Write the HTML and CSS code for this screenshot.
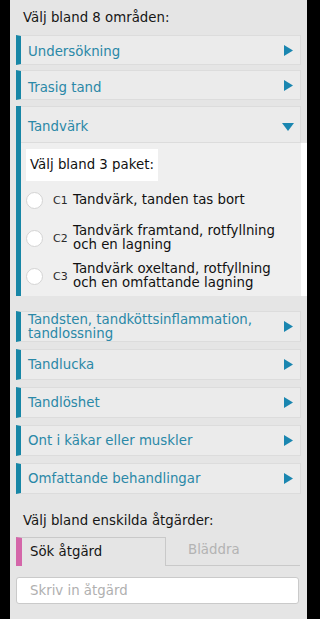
FILE: index.html
```html
<!DOCTYPE html>
<html lang="sv">
<head>
<meta charset="utf-8">
<title>Välj område</title>
<link rel="stylesheet" href="styles.css">
</head>
<body>
<div class="panel">
  <div class="heading">Välj bland 8 områden:</div>
  <div class="areas">
    <div class="item first"><span class="label">Undersökning</span><svg class="arr" width="9" height="11" viewBox="0 0 9 11"><path d="M0 0L9 5.5L0 11Z"/></svg></div>
    <div class="item second"><span class="label">Trasig tand</span><svg class="arr" width="9" height="11" viewBox="0 0 9 11"><path d="M0 0L9 5.5L0 11Z"/></svg></div>
    <div class="group">
      <div class="group-head"><span class="label">Tandvärk</span><svg class="arr" width="12" height="8" viewBox="0 0 12 8"><path d="M0 0H12L6 8Z"/></svg></div>
      <div class="group-body">
        <div class="pkg-title">Välj bland 3 paket:</div>
        <div class="pkg">
          <span class="radio"></span><span class="code">C1</span><span class="pkg-text">Tandvärk, tanden tas bort</span>
        </div>
        <div class="pkg">
          <span class="radio"></span><span class="code">C2</span><span class="pkg-text">Tandvärk framtand, rotfyllning<br>och en lagning</span>
        </div>
        <div class="pkg">
          <span class="radio"></span><span class="code">C3</span><span class="pkg-text">Tandvärk oxeltand, rotfyllning<br>och en omfattande lagning</span>
        </div>
      </div>
    </div>
    <div class="item later"><span class="label">Tandsten, tandköttsinflammation,<br>tandlossning</span><svg class="arr" width="9" height="11" viewBox="0 0 9 11"><path d="M0 0L9 5.5L0 11Z"/></svg></div>
    <div class="item later"><span class="label">Tandlucka</span><svg class="arr" width="9" height="11" viewBox="0 0 9 11"><path d="M0 0L9 5.5L0 11Z"/></svg></div>
    <div class="item later"><span class="label">Tandlöshet</span><svg class="arr" width="9" height="11" viewBox="0 0 9 11"><path d="M0 0L9 5.5L0 11Z"/></svg></div>
    <div class="item later"><span class="label">Ont i käkar eller muskler</span><svg class="arr" width="9" height="11" viewBox="0 0 9 11"><path d="M0 0L9 5.5L0 11Z"/></svg></div>
    <div class="item later last"><span class="label">Omfattande behandlingar</span><svg class="arr" width="9" height="11" viewBox="0 0 9 11"><path d="M0 0L9 5.5L0 11Z"/></svg></div>
  </div>
  <div class="sub-heading">Välj bland enskilda åtgärder:</div>
  <div class="tabs">
    <div class="tab active">Sök åtgärd</div>
    <div class="tab inactive">Bläddra</div>
  </div>
  <input class="search" type="text" placeholder="Skriv in åtgärd">
</div>
</body>
</html>
```

FILE: styles.css
```css
html, body {
  margin: 0;
  padding: 0;
  background: #000;
}

.panel {
  width: 297px;
  margin: 0 0 0 10px;
  padding: 0 6px;
  min-height: 619px;
  box-sizing: border-box;
  background: #e5e5e5;
  font-family: "DejaVu Sans", "Liberation Sans", sans-serif;
  font-size: 13.33px;
  color: #161616;
}

.heading {
  height: 35px;
  box-sizing: border-box;
  padding: 10px 0 0 7px;
  line-height: 15px;
}

.areas {
  display: flex;
  flex-direction: column;
}

.item {
  display: flex;
  align-items: center;
  justify-content: space-between;
  box-sizing: border-box;
  height: 30px;
  padding: 0 7px 0 7px;
  background: #ebebeb;
  border: 1px solid #dcdcdc;
  border-left: 5px solid #1786a6;
  color: #2a88a7;
  line-height: 14px;
}

.item.first { margin-bottom: 5px; }
.item.second { margin-bottom: 6px; }
.item.first .label { margin-top: 3px; }
.item.second .label { margin-top: 5px; }
.item.later { height: 31px; margin-bottom: 7px; }
.item.later.last { margin-bottom: 0; }

.arr {
  flex: none;
  fill: #1a86b0;
}

.group {
  border-left: 5px solid #1786a6;
  margin-bottom: 15px;
}

.group-head {
  display: flex;
  align-items: center;
  justify-content: space-between;
  box-sizing: border-box;
  height: 37px;
  padding: 4px 6px 0 7px;
  background: #ebebeb;
  border: 1px solid #dcdcdc;
  border-left: none;
  color: #2a88a7;
  line-height: 15px;
}

.group-body {
  margin-right: -6px;
  border-right: 6px solid #fff;
  background: #efefef;
  padding: 6px 0 1px 5px;
}

.pkg-title {
  display: inline-block;
  background: #fff;
  padding: 0 4px;
  height: 32px;
  line-height: 32px;
  color: #111;
}

.pkg {
  display: flex;
  align-items: center;
  min-height: 38px;
}

.radio {
  flex: none;
  width: 15px;
  height: 15px;
  border-radius: 50%;
  background: #fff;
  border: 1px solid #d4d4d4;
}

.code {
  flex: none;
  width: 20px;
  margin-left: 10px;
  font-size: 11px;
  color: #2a2a2a;
}

.pkg-text {
  line-height: 14px;
  color: #111;
}

.sub-heading {
  padding: 19px 0 0 7px;
  line-height: 15px;
}

.tabs {
  display: flex;
  margin: 9px 1px 0 0;
  height: 29px;
}

.tab {
  box-sizing: border-box;
  height: 29px;
  line-height: 28px;
}

.tab.active {
  width: 150px;
  padding-left: 8px;
  border-left: 6px solid #d466a9;
  border-top: 1px solid #c9c9c9;
  border-right: 1px solid #c9c9c9;
  color: #161616;
}

.tab.inactive {
  flex: 1;
  padding-left: 22px;
  border-bottom: 1px solid #c9c9c9;
  color: #b3b3b3;
  line-height: 26px;
}

.search {
  display: block;
  box-sizing: border-box;
  width: 283px;
  height: 27px;
  margin: 11px 0 0 0;
  padding: 0 0 0 13px;
  border: 1px solid #cacaca;
  border-radius: 3px;
  background: #fff;
  font-family: "DejaVu Sans", "Liberation Sans", sans-serif;
  font-size: 13.33px;
  color: #161616;
  outline: none;
}

.search::placeholder {
  color: #b0b0b0;
}
```
